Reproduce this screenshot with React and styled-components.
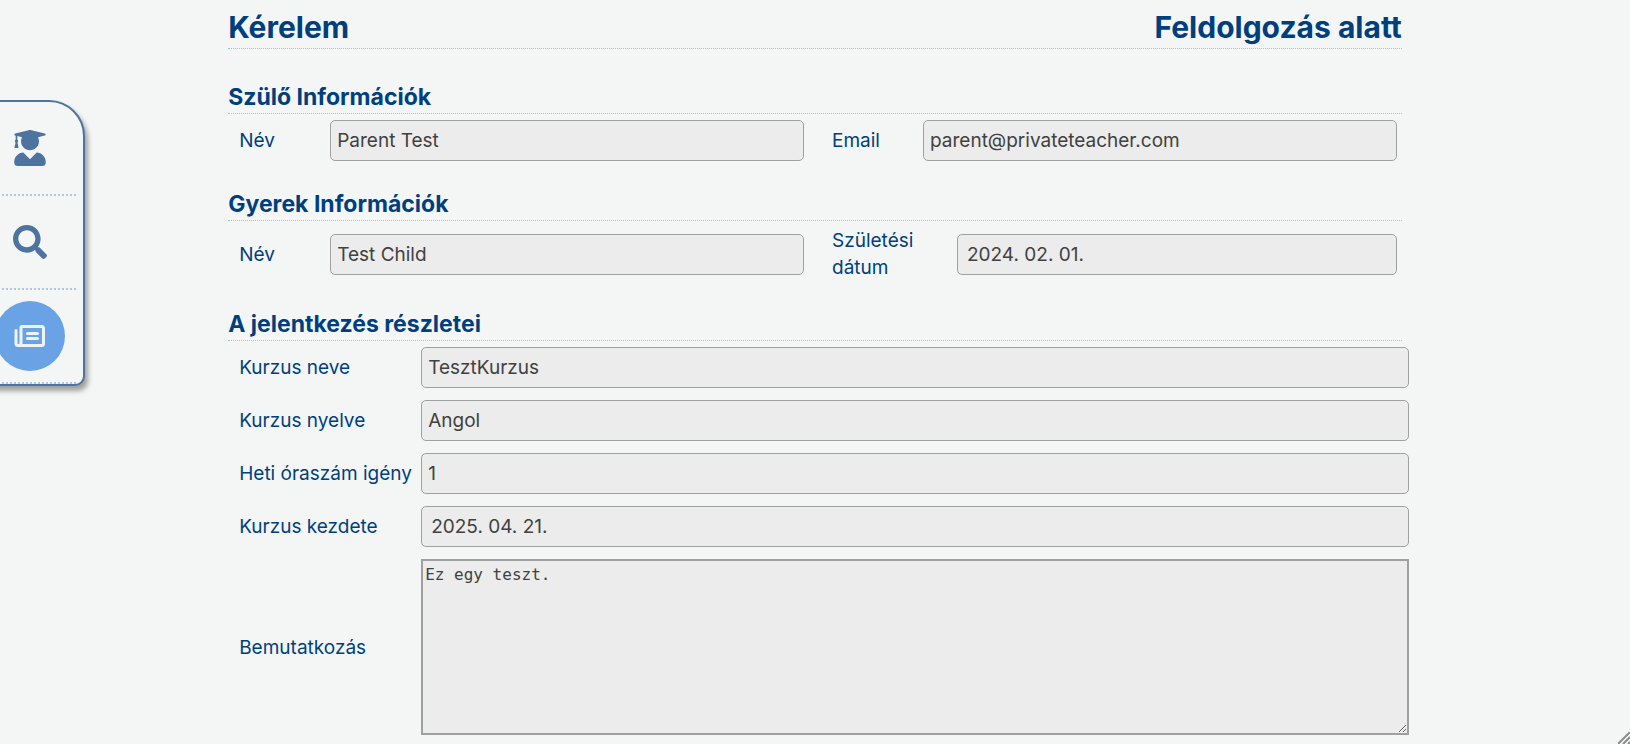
import React from 'react';
import styled, { createGlobalStyle } from 'styled-components';
import { FaUserGraduate, FaSearch } from 'react-icons/fa';

const GlobalStyle = createGlobalStyle`
  * { box-sizing: border-box; }
  body {
    margin: 0;
    background: #f4f6f5;
    color: #003f7d;
    font: 19px/27px Inter, 'Open Sans', sans-serif;
    overflow-x: hidden;
  }
`;

const Sidebar = styled.nav`
  position: fixed;
  top: 100px;
  left: -26px;
  width: 111px;
  padding: 0 7px;
  background: #f4f6f5;
  border: 2px solid #4d739f;
  border-radius: 0 36px 10px 0;
  box-shadow: 3px 5px 5px rgba(0, 0, 0, 0.35);
`;

const SidebarItem = styled.div`
  display: flex;
  align-items: center;
  justify-content: center;
  height: 94px;
  border-bottom: 2px dotted #b4c5de;
`;

const IconButton = styled.button`
  display: flex;
  align-items: center;
  justify-content: center;
  width: 70px;
  height: 70px;
  padding: 0;
  border: 0;
  border-radius: 50%;
  background: ${(p) => (p.$active ? '#6aa2e6' : 'transparent')};
  color: ${(p) => (p.$active ? '#f0f3f5' : '#4d739f')};
`;

const Page = styled.main`
  padding: 6px 14% 9px;
`;

const TitleBar = styled.header`
  display: flex;
  justify-content: space-between;
  border-bottom: 1px dotted #8fd6a0;
`;

const Title = styled.h1`
  margin: 0;
  font-size: 30px;
  line-height: 42px;
  font-weight: 700;
`;

const Section = styled.section`
  margin-top: 32px;

  & + & { margin-top: 27px; }
`;

const SectionTitle = styled.h2`
  margin: 0 0 6px;
  border-bottom: 1px dotted #8fd6a0;
  font-size: 23px;
  line-height: 32px;
  font-weight: 700;
`;

const FieldPair = styled.div`
  display: grid;
  grid-template-columns: 1fr 1fr;
  gap: 28px;
  padding: 0 5px 0 11px;
`;

const FieldList = styled.div`
  display: flex;
  flex-direction: column;
  gap: 12px;
  margin-right: -7px;
  padding-left: 11px;
`;

const Field = styled.div`
  display: grid;
  grid-template-columns: ${(p) => p.$label}px 1fr;
  align-items: center;
`;

const Label = styled.label`
  padding-right: ${(p) => (p.$wrap ? 24 : 0)}px;
`;

const TextInput = styled.input`
  width: 100%;
  min-width: 0;
  height: 41px;
  padding: 0 ${(p) => (p.$date ? 9 : 6)}px;
  border: 1px solid #9fa1a0;
  border-radius: 5px;
  background: #ebeceb;
  color: #414141;
  font: inherit;
  outline: none;
`;

const TextArea = styled.textarea`
  display: block;
  width: 100%;
  height: 176px;
  padding: 2px;
  border: 2px solid #9fa1a0;
  background: #ebeceb;
  color: #414141;
  font: 16px/24px 'DejaVu Sans Mono', monospace;
  resize: both;
  outline: none;
`;

const CornerGrip = styled.svg`
  position: fixed;
  right: 0;
  bottom: 0;
`;

function NewspaperIcon() {
  return (
    <svg width="32" height="24" viewBox="0 0 32 24" fill="none" stroke="currentColor" strokeWidth="3" strokeLinecap="round" strokeLinejoin="round" aria-hidden="true">
      <path d="M7.5 2.5H27.5Q29.5 2.5 29.5 4.5V19.5Q29.5 21.5 27.5 21.5H4Q2 21.5 2 19.5V6.5M7 3V19Q7 21 5 21.5M13.5 9.5H23.5M13.5 14.5H23.5" />
    </svg>
  );
}

function TextField({ id, label, value, width, date, wrap }) {
  return (
    <Field $label={width}>
      <Label htmlFor={id} $wrap={wrap}>{label}</Label>
      <TextInput id={id} defaultValue={value} $date={date} readOnly />
    </Field>
  );
}

export default function App() {
  return (
    <>
      <GlobalStyle />
      <Sidebar>
        <SidebarItem><IconButton aria-label="Diákok"><FaUserGraduate size={36} /></IconButton></SidebarItem>
        <SidebarItem><IconButton aria-label="Keresés"><FaSearch size={34} /></IconButton></SidebarItem>
        <SidebarItem><IconButton aria-label="Kérelmek" $active><NewspaperIcon /></IconButton></SidebarItem>
      </Sidebar>
      <Page>
        <TitleBar>
          <Title>Kérelem</Title>
          <Title as="div">Feldolgozás alatt</Title>
        </TitleBar>
        <Section>
          <SectionTitle>Szülő Információk</SectionTitle>
          <FieldPair>
            <TextField id="parent-name" label="Név" value="Parent Test" width={91} />
            <TextField id="parent-email" label="Email" value="parent@privateteacher.com" width={91} />
          </FieldPair>
        </Section>
        <Section>
          <SectionTitle>Gyerek Információk</SectionTitle>
          <FieldPair>
            <TextField id="child-name" label="Név" value="Test Child" width={91} />
            <TextField id="child-birth" label="Születési dátum" value="2024. 02. 01." width={125} date wrap />
          </FieldPair>
        </Section>
        <Section>
          <SectionTitle>A jelentkezés részletei</SectionTitle>
          <FieldList>
            <TextField id="course-name" label="Kurzus neve" value="TesztKurzus" width={182} />
            <TextField id="course-language" label="Kurzus nyelve" value="Angol" width={182} />
            <TextField id="weekly-lessons" label="Heti óraszám igény" value="1" width={182} />
            <TextField id="course-start" label="Kurzus kezdete" value="2025. 04. 21." width={182} date />
            <Field $label={182}>
              <Label htmlFor="intro">Bemutatkozás</Label>
              <TextArea id="intro" defaultValue="Ez egy teszt." readOnly />
            </Field>
          </FieldList>
        </Section>
      </Page>
      <CornerGrip width="12" height="12" viewBox="0 0 12 12" stroke="#8b8d8c" strokeWidth="2" aria-hidden="true">
        <path d="M0 12L12 0M5 12L12 5M10 12L12 10" />
      </CornerGrip>
    </>
  );
}
